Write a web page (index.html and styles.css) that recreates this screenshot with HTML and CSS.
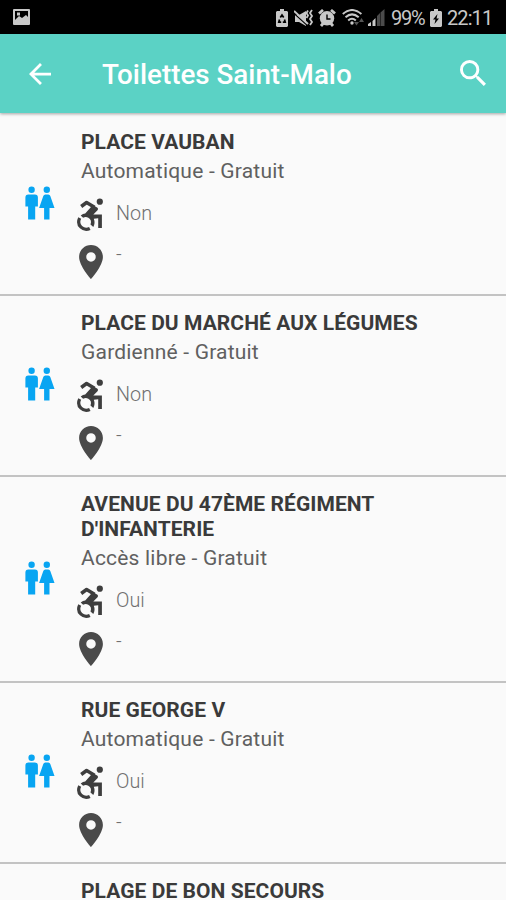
FILE: index.html
```html
<!DOCTYPE html>
<html lang="fr">
<head>
<meta charset="utf-8">
<title>Toilettes Saint-Malo</title>
<link rel="stylesheet" href="styles.css">
</head>
<body>
<svg class="defs" aria-hidden="true">
  <symbol id="wc" viewBox="0 0 30 34">
    <circle cx="6.6" cy="3.7" r="3.2"/><circle cx="21.8" cy="3.7" r="3.2"/>
    <path d="M3.3 8.4h6.6q3 0 3 3v9.2h-2.7v12.9H3.1V20.6H.4v-9.2q0-3 2.9-3zM20.3 8.4h3q1.500 0 2 1.500l4.200 12.200h-5v11.400h-5.400V22.100h-5l4.200-12.200q.5-1.500 2-1.500z"/>
  </symbol>
  <symbol id="access" viewBox="0 0 26 34">
    <circle cx="22.8" cy="3.7" r="3.1"/>
    <path fill="none" stroke="currentColor" stroke-width="3.5" stroke-linejoin="round" d="M4.2 8.5 9.6 4.5 17.5 9.2"/>
    <path d="M14.5 6.2 20.5 9.8Q21.7 11 20.5 12.3L16.3 16.4H24.9V30H21.2V20.3L16.8 20.8Q18.5 25 16.3 29L13.5 26.6Q15.2 21.6 11.3 19.7Q8.7 18.5 6.1 19.8L3.7 17.4Q6 15.6 8.2 15.5L13.8 9.3Z"/>
    <path fill="none" stroke="currentColor" stroke-width="3.2" d="M2.7 20Q.1 25.5 4 29.2Q8 32.9 12.8 30.5"/>
  </symbol>
  <symbol id="pin" viewBox="5 2 14 20">
    <path d="M12 2C8.130 2 5 5.130 5 9c0 5.250 7 13 7 13s7-7.750 7-13c0-3.870-3.130-7-7-7zm0 9.800a2.800 2.800 0 1 1 0-5.600 2.800 2.800 0 0 1 0 5.600z"/>
  </symbol>
</svg>

<div class="status">
  <svg class="s-photo" viewBox="0 0 17 16"><path fill-rule="evenodd" d="M1 0h15q1 0 1 1v14q0 1-1 1H1q-1 0-1-1V1q0-1 1-1zM2 2v9l4-4 3 2 4-3 2 2V2zM4 3.500h3v3H4z"/></svg>
  <div class="status-right">
    <svg class="s-saver" viewBox="0 0 12 18"><path d="M4 0h4v2h3l1 1v14l-1 1H1l-1-1V3l1-1h3z"/><path d="M4.300 8.500 6 6l1.700 2.500M3.500 10.500 2.800 13.200H5.200M8.500 10.500l.7 2.700H6.800" fill="none" stroke="#000" stroke-width="1.700"/></svg>
    <svg class="s-mute" viewBox="0 0 20 18"><path d="M1 6h4l7-4v15l-7-4H1z"/><path d="M0 4.500l14 12.500" stroke="#000" stroke-width="1.200"/><path d="M0 2l14 13" stroke="#c8c8c8" stroke-width="2"/><path d="M14 1.500l-1.500 2.500 1.500 2.500-1.500 2.500M18 1l-2 3 2 3-2 3 2 3-2 3" fill="none" stroke="#c8c8c8" stroke-width="1.800"/></svg>
    <svg class="s-alarm" viewBox="0 0 18 18"><circle cx="9" cy="9.300" r="7.200"/><path d="M1 4.500 5 1M17 4.500 13 1M3 17l2.500-3M15 17l-2.500-3" stroke="#c8c8c8" stroke-width="2.800"/><path d="M9 5.500v4.500h3.500" fill="none" stroke="#000" stroke-width="1.400"/></svg>
    <svg class="s-wifi" viewBox="0 0 23 18"><g fill="none" stroke="#c8c8c8" stroke-width="2"><path d="M.8 5Q10 -3 19.400 5M3.500 8.300Q10 2.500 16.700 8.300M6.200 11.500Q10 8 13.800 11.500"/></g><circle cx="10" cy="14" r="1.700"/><path fill="#555" d="M12 13h5l-2.500 3.500zM17 13l2.500-4 2.500 4z"/></svg>
    <svg class="s-signal" viewBox="0 0 17 18"><path d="M0 17v-2l3-2v4zM4.500 17v-5l3-3v8z"/><path fill="#4b4b4b" d="M9 17V7l3-3v13zM12.500 17V3.500L16.500 0v17z"/></svg>
    <span class="s-pct">99%</span>
    <svg class="s-batt" viewBox="0 0 12 18"><path fill-rule="evenodd" d="M4 0h4v2h3l1 1v14l-1 1H1l-1-1V3l1-1h3zM7.500 5 3 10.500h2.500L4.500 15 9 9.500H6.500z"/></svg>
    <span class="s-time">22:11</span>
  </div>
</div>

<header class="bar">
  <svg class="back" viewBox="4 4 16 16"><path d="M20 11H7.830l5.590-5.590L12 4l-8 8 8 8 1.410-1.410L7.830 13H20v-2z"/></svg>
  <h1>Toilettes Saint-Malo</h1>
  <svg class="search" viewBox="3 3 17.500 17.500"><path d="M15.500 14h-.79l-.28-.27A6.471 6.471 0 0 0 16 9.500 6.500 6.500 0 1 0 9.500 16c1.610 0 3.090-.59 4.230-1.570l.27.28v.79l5 4.990L20.490 19l-4.990-5zm-6 0C7.010 14 5 11.990 5 9.500S7.010 5 9.500 5 14 7.010 14 9.500 11.990 14 9.500 14z"/></svg>
</header>

<main>
  <article class="row">
    <svg class="wc"><use href="#wc"/></svg>
    <div class="info">
      <h2>PLACE VAUBAN</h2>
      <p class="type">Automatique - Gratuit</p>
      <p class="line"><svg class="access"><use href="#access"/></svg><span>Non</span></p>
      <p class="line place"><svg class="pin"><use href="#pin"/></svg><span>-</span></p>
    </div>
  </article>
  <article class="row">
    <svg class="wc"><use href="#wc"/></svg>
    <div class="info">
      <h2>PLACE DU MARCHÉ AUX LÉGUMES</h2>
      <p class="type">Gardienné - Gratuit</p>
      <p class="line"><svg class="access"><use href="#access"/></svg><span>Non</span></p>
      <p class="line place"><svg class="pin"><use href="#pin"/></svg><span>-</span></p>
    </div>
  </article>
  <article class="row tall">
    <svg class="wc"><use href="#wc"/></svg>
    <div class="info">
      <h2>AVENUE DU 47ÈME RÉGIMENT<br>D'INFANTERIE</h2>
      <p class="type">Accès libre - Gratuit</p>
      <p class="line"><svg class="access"><use href="#access"/></svg><span>Oui</span></p>
      <p class="line place"><svg class="pin"><use href="#pin"/></svg><span>-</span></p>
    </div>
  </article>
  <article class="row">
    <svg class="wc"><use href="#wc"/></svg>
    <div class="info">
      <h2>RUE GEORGE V</h2>
      <p class="type">Automatique - Gratuit</p>
      <p class="line"><svg class="access"><use href="#access"/></svg><span>Oui</span></p>
      <p class="line place"><svg class="pin"><use href="#pin"/></svg><span>-</span></p>
    </div>
  </article>
  <article class="row last">
    <div class="info">
      <h2>PLAGE DE BON SECOURS</h2>
    </div>
  </article>
</main>
</body>
</html>
```
FILE: styles.css
```css
* { box-sizing: border-box; margin: 0; padding: 0; }
body {
  height: 900px;
  display: flex;
  flex-direction: column;
  overflow: hidden;
  background: #fafafa;
  font-family: Roboto, "Liberation Sans", sans-serif;
}
svg { display: block; flex: none; }
.defs { position: absolute; width: 0; height: 0; }

.status {
  flex: none;
  height: 34px;
  padding: 0 13px;
  display: flex;
  align-items: center;
  justify-content: space-between;
  background: #000;
  color: #c8c8c8;
  fill: #c8c8c8;
}
.s-photo { width: 17px; height: 16px; }
.status-right { display: flex; align-items: center; height: 32px; margin-top: 2px; }
.s-saver, .s-batt { width: 12px; height: 18px; }
.s-saver { margin-right: 1px; }
.s-mute { width: 20px; height: 18px; margin-left: 5px; }
.s-alarm { width: 18px; height: 18px; margin-left: 4px; }
.s-wifi { width: 23px; height: 18px; margin-left: 6px; }
.s-signal { width: 17px; height: 18px; margin-left: 3px; }
.s-pct, .s-time { font-size: 20px; line-height: 24px; white-space: nowrap; }
.s-pct { width: 35px; margin-left: 6px; letter-spacing: -1.2px; }
.s-batt { margin-left: 4px; }
.s-time { width: 46px; margin-left: 5px; letter-spacing: -0.9px; }

.bar {
  position: relative;
  flex: none;
  height: 79px;
  padding: 0 20px 0 29px;
  display: flex;
  align-items: center;
  background: #5bd2c5;
  color: #fff;
  fill: #fff;
  box-shadow: 0 1px 3px rgba(0, 0, 0, .35);
}
.back { width: 22px; height: 22px; }
.bar h1 {
  flex: 1;
  margin-left: 51px;
  padding-top: 3px;
  font-size: 27.8px;
  line-height: 32px;
  font-weight: 500;
  white-space: nowrap;
}
.search { width: 26px; height: 26px; margin-bottom: 2px; }

main { flex: 1; min-height: 0; padding-top: 2px; }
.row {
  display: flex;
  align-items: center;
  height: 181px;
  padding-left: 25px;
  border-bottom: 2px solid #c3c3c3;
}
.row.tall { height: 206px; }
.row.last {
  height: auto;
  padding-left: 81px;
  border-bottom: 0;
}
.wc { width: 30px; height: 34px; margin-bottom: 3px; fill: #08a5f2; }
.info { align-self: flex-start; margin-left: 26px; padding-top: 15px; }
.last .info { margin-left: 0; padding-top: 17px; }
h2 {
  font-size: 21px;
  line-height: 25px;
  font-weight: 700;
  letter-spacing: .06px;
  color: #3a3a3a;
  white-space: nowrap;
}
.last h2 { line-height: 21px; }
.type {
  margin-top: 4px;
  font-size: 21px;
  line-height: 25px;
  letter-spacing: .2px;
  color: #606060;
  white-space: nowrap;
}
.line {
  display: flex;
  margin-left: -4px;
  margin-top: 14px;
  height: 34px;
  color: #707070;
  font-size: 19.8px;
  line-height: 24px;
  font-weight: 300;
}
.line svg { color: #3e3e3e; fill: #3e3e3e; }
.line span { padding-top: 4px; }
.access { width: 26px; height: 34px; margin-right: 13px; }
.pin { width: 24px; height: 34px; margin: -1px 13px 0 2px; }
.line.place svg { fill: #4a4a4a; }
.line.place span { padding-top: 0; margin-top: -3px; }
```
